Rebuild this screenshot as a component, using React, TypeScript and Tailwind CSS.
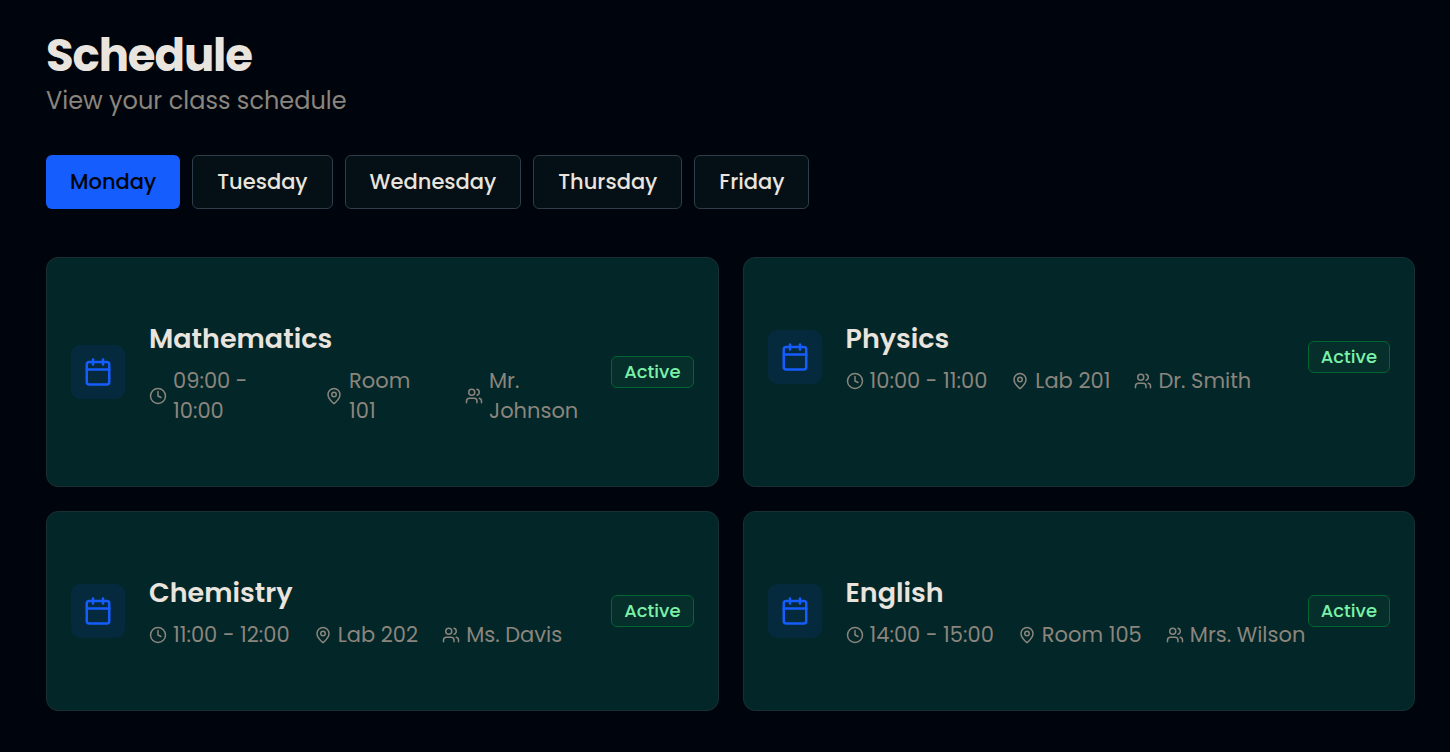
import React, { useState } from 'react';
import { Calendar, Clock, MapPin, Users } from 'lucide-react';

interface ClassItem {
  id: number;
  subject: string;
  time: string;
  room: string;
  teacher: string;
  compact?: boolean;
}

const days = ['Monday', 'Tuesday', 'Wednesday', 'Thursday', 'Friday'];

// A newline in a detail splits it over two lines inside the card
const classes: ClassItem[] = [
  { id: 1, subject: 'Mathematics', time: '09:00 -\n10:00', room: 'Room\n101', teacher: 'Mr.\nJohnson', compact: true },
  { id: 2, subject: 'Physics', time: '10:00 - 11:00', room: 'Lab 201', teacher: 'Dr. Smith' },
  { id: 3, subject: 'Chemistry', time: '11:00 - 12:00', room: 'Lab 202', teacher: 'Ms. Davis' },
  { id: 4, subject: 'English', time: '14:00 - 15:00', room: 'Room 105', teacher: 'Mrs. Wilson' },
];

function Detail({ icon, text, className = '' }: { icon: React.ReactNode; text: string; className?: string }) {
  return (
    <div className={`flex items-center gap-1.5 ${className}`}>
      {icon}
      <span className="whitespace-pre">{text}</span>
    </div>
  );
}

function ClassCard({ item }: { item: ClassItem }) {
  return (
    <div className="rounded-xl border border-[#182f33] bg-[#032628] px-6 py-[60px]">
      <div className="flex items-center justify-between">
        <div className="flex items-center gap-6">
          <div className="flex size-[54px] shrink-0 items-center justify-center rounded-[9px] bg-[#062a3d]">
            <Calendar className="size-[30px] text-[#155dfc]" />
          </div>
          <div>
            <h3 className="text-[27px] leading-[42px] font-semibold text-[#e9e4de]">{item.subject}</h3>
            <div className="mt-1.5 flex items-center gap-6 text-[21px] leading-[30px] text-[#8a857d]">
              <Detail
                icon={<Clock className="size-[18px] shrink-0" />}
                text={item.time}
                className={item.compact ? 'w-[152px]' : ''}
              />
              <Detail
                icon={<MapPin className="size-[18px] shrink-0" />}
                text={item.room}
                className={item.compact ? 'w-[116px]' : ''}
              />
              <Detail icon={<Users className="size-[18px] shrink-0" />} text={item.teacher} />
            </div>
          </div>
        </div>
        <span className="shrink-0 rounded-md border border-[#016630] bg-[#062e2a] px-3 text-[18px] leading-[30px] font-medium text-[#7bf1a8]">
          Active
        </span>
      </div>
    </div>
  );
}

export default function App() {
  const [selectedDay, setSelectedDay] = useState('Monday');

  return (
    <div className="min-h-screen bg-[#00040c] pt-[29px] pr-[35px] pb-9 pl-[46px] font-['Poppins','Inter',sans-serif]">
      {/* Header */}
      <div>
        <h1 className="text-[45px] leading-[54px] font-bold tracking-tight text-[#e9e4de]">Schedule</h1>
        <p className="text-[24px] leading-[36px] text-[#8a857d]">View your class schedule</p>
      </div>

      {/* Day selector */}
      <div className="mt-9 flex gap-3">
        {days.map((day) => (
          <button
            key={day}
            onClick={() => setSelectedDay(day)}
            className={`h-[54px] rounded-md px-6 text-[21px] leading-[30px] font-medium ${
              selectedDay === day
                ? 'bg-[#155dfc] text-[#00040c]'
                : 'border border-[#2d3d49] bg-[#041015] text-[#e9e4de]'
            }`}
          >
            {day}
          </button>
        ))}
      </div>

      {/* Classes */}
      <div className="mt-12 grid grid-cols-2 gap-6">
        {classes.map((item) => (
          <ClassCard key={item.id} item={item} />
        ))}
      </div>
    </div>
  );
}
